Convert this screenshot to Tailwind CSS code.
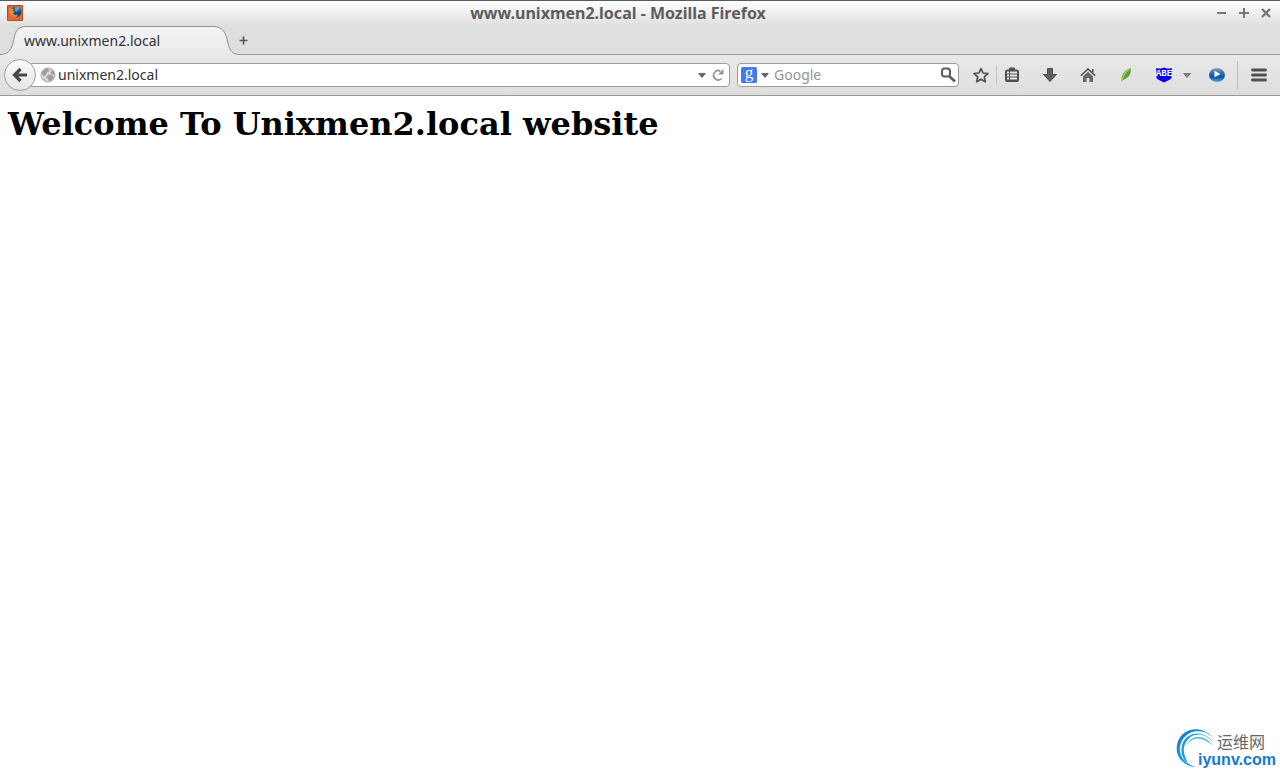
<!DOCTYPE html>
<html lang="en">
<head>
    <meta charset="UTF-8">
    <meta name="viewport" content="width=device-width, initial-scale=1.0">
    <title>www.unixmen2.local - Mozilla Firefox</title>
    <script src="https://cdn.jsdelivr.net/npm/@tailwindcss/browser@4"></script>
</head>
<body class="min-h-screen flex flex-col bg-white font-['Noto_Sans','Noto_Sans_CJK_SC',sans-serif] text-[#333]">
    <!-- Window title and tabs -->
    <header class="bg-[#dfdfdf]">
        <div class="h-[26px] flex items-center border-t border-[#5c5a5c] bg-linear-to-b from-white to-[#dfdfdf] pl-[7px] pr-[5px] pb-[2px]">
            <svg class="size-4 shrink-0" viewBox="0 0 16 16">
                <rect width="16" height="16" rx="1" fill="#b9481f"/>
                <rect x="1" y="1" width="14" height="14" fill="#e5692b"/>
                <circle cx="9" cy="7" r="5.500" fill="#2769a3"/>
                <path d="M8 2.500c2-1 4-.5 5 1l-2 1-1 2-2-1z" fill="#5fa5cf"/>
                <path d="M2 3l2 1 2.500 0L5.500 6l2 1L6 8.500 8 10l3-.5C10 13 5 13 3 9z" fill="#f08a35"/>
                <path d="M8 7l-1.500 1.500L8 9.800l3-.5C10 12.500 12.500 11.500 13.500 9c.8-2 .5-3-.5-4-.5 2-3 3-5 2z" fill="#1b4672"/>
            </svg>
            <div class="flex-1 text-center text-[16px] leading-5 font-bold text-[#5c5c5c]">www.unixmen2.local - Mozilla Firefox</div>
            <div class="flex gap-1 text-[#777]">
                <button type="button" aria-label="Minimize" class="w-[18px] flex justify-center"><svg class="size-3" viewBox="0 0 12 12"><path d="M1 6h9" stroke="currentColor" stroke-width="2"/></svg></button>
                <button type="button" aria-label="Maximize" class="w-[18px] flex justify-center"><svg class="size-3" viewBox="0 0 12 12"><path d="M1 6h10M6 1v10" stroke="currentColor" stroke-width="2"/></svg></button>
                <button type="button" aria-label="Close" class="w-[18px] flex justify-center"><svg class="size-3" viewBox="0 0 12 12"><path d="M2 2l8 8M10 2l-8 8" stroke="currentColor" stroke-width="2.400"/></svg></button>
            </div>
        </div>
        <div class="h-[29px] flex">
            <button type="button" class="relative w-60 text-left">
                <svg class="absolute inset-0 w-60 h-[29px]" viewBox="0 0 240 29">
                    <defs>
                        <linearGradient id="tab" x2="0" y2="1"><stop stop-color="#f4f4f4"/><stop offset="1" stop-color="#e9e9e9"/></linearGradient>
                    </defs>
                    <path d="M0 28.500C7 28.500 11 25 13 17C15 7 16 .5 26 .5H213C223 .5 226 7 228 17C229.500 25 233 28.500 240 28.500V29H0Z" fill="url(#tab)"/>
                    <path d="M0 28.500C7 28.500 11 25 13 17C15 7 16 .5 26 .5H213C223 .5 226 7 228 17C229.500 25 233 28.500 240 28.500" fill="none" stroke="#929292"/>
                </svg>
                <span class="relative pl-6 text-[14px] leading-7">www.unixmen2.local</span>
            </button>
            <div class="flex-1 border-b border-[#999] flex">
                <button type="button" aria-label="New tab" class="w-[6px] flex items-center justify-center"><svg class="size-[9px] shrink-0" viewBox="0 0 9 9"><path d="M.5 4.500h8M4.500 .5v8" stroke="#555" stroke-width="1.700"/></svg></button>
            </div>
        </div>
    </header>

    <!-- Navigation toolbar -->
    <nav class="h-[41px] flex items-center border-b border-[#999] bg-linear-to-b from-[#e9e9e9] to-[#dedede] pl-1 pr-[6px]">
        <button type="button" aria-label="Back" class="z-10 size-8 shrink-0 rounded-full border border-[#9aa3ab] bg-linear-to-b from-[#fafafa] to-[#e6e6e6] flex items-center justify-center">
            <svg class="size-4" viewBox="0 0 16 16"><path d="M8.500 2L2.500 8l6 6M3 8h12" fill="none" stroke="#484848" stroke-width="3.200"/></svg>
        </button>
        <form class="-ml-2 mr-[7px] flex-1 h-6 flex items-center rounded-sm border border-[#9c9c9c] bg-white pl-[11px] pr-[3px]">
            <svg class="size-4 shrink-0" viewBox="0 0 16 16">
                <circle cx="8" cy="8" r="7" fill="#dadada" stroke="#adadad"/>
                <path d="M1.500 6C3 3 5 1.500 8 1.500L9.500 4 7 5.500 5 9 3.500 9.500zM10.500 2l3 2 1.200 3-2 1-2.200-2 1.200-2zM8.500 7.500l3 .5 2.500 2-2 3-3 1.500L8 12l-2-2zM2.500 11l2.500 1 1 2.200z" fill="#9e9e9e"/>
            </svg>
            <input type="text" aria-label="Address" value="unixmen2.local" class="min-w-0 flex-1 pl-[2px] text-[14px] leading-5 outline-none">
            <button type="button" aria-label="Show history" class="w-4 flex justify-center"><svg class="w-2 h-[5px]" viewBox="0 0 9 6"><path d="M.5 .5h8L4.500 5.500z" fill="#666" stroke="#555"/></svg></button>
            <button type="button" aria-label="Reload" class="w-4 flex justify-center">
                <svg class="size-3" viewBox="0 0 12 12"><path d="M8.500 2.200A4.600 4.600 0 1 0 9.500 9.500" fill="none" stroke="#8b959b" stroke-width="1.700"/><path d="M11.500 0v5.500H6z" fill="#8b959b"/></svg>
            </button>
        </form>
        <form class="w-[222px] h-6 flex items-center rounded-sm border border-[#9c9c9c] bg-white pl-[3px] pr-[2px]">
            <button type="button" aria-label="Search engine" class="flex items-center gap-1">
                <svg class="size-4 overflow-visible" viewBox="0 0 16 16">
                    <rect width="16" height="16" rx="1.500" fill="#4179f7"/>
                    <text x="8" y="11" text-anchor="middle" font-family="Liberation Serif, serif" font-size="17" fill="#fff">g</text>
                </svg>
                <svg class="w-2 h-[5px]" viewBox="0 0 9 6"><path d="M.5 .5h8L4.500 5.500z" fill="#666" stroke="#555"/></svg>
            </button>
            <input type="text" aria-label="Search" placeholder="Google" class="min-w-0 flex-1 pl-[5px] text-[14px] leading-5 outline-none placeholder:text-[#8f9494]">
            <button type="button" aria-label="Go" class="shrink-0"><svg class="size-4" viewBox="0 0 16 16"><rect x="2" y="1.500" width="8" height="8" rx="2.500" fill="none" stroke="#5c5c5c" stroke-width="2"/><path d="M9.500 9.500l5.500 5" stroke="#5c5c5c" stroke-width="2.600"/></svg></button>
        </form>
        <button type="button" aria-label="Bookmark this page" class="ml-[7px] w-[30px] flex justify-center">
            <svg class="size-4" viewBox="0 0 16 16"><path d="M8 1.500l2 4.500 5 .5-3.700 3.300 1 5L8 12.200l-4.300 2.600 1-5L1 6.500 6 6z" fill="none" stroke="#505050" stroke-width="1.700" stroke-linejoin="round"/></svg>
        </button>
        <span class="w-px h-[18px] bg-[#bcc3cb]"></span>
        <div class="flex gap-2">
            <button type="button" aria-label="Bookmarks" class="w-[30px] flex justify-center">
                <svg class="size-4" viewBox="0 0 16 16"><path d="M5 3V1.500Q5 .5 6 .5h4q1 0 1 1V3" fill="#505050"/><rect x="1" y="2.500" width="14" height="12.500" rx="2" fill="#505050"/><path d="M3 5.500h2M6 5.500h7M3 8.500h2M6 8.500h7M3 11.500h2M6 11.500h7" stroke="#e8e8e8" stroke-width="1.800"/></svg>
            </button>
            <button type="button" aria-label="Downloads" class="w-[30px] flex justify-center">
                <svg class="size-4" viewBox="0 0 16 16"><path d="M5.500 1.500h5v6H14.500L8 14.500 1.500 7.500h4z" fill="#606060" stroke="#4a4a4a" stroke-linejoin="round"/></svg>
            </button>
            <button type="button" aria-label="Home" class="w-[30px] flex justify-center">
                <svg class="size-4" viewBox="0 0 16 16"><path d="M3 9.500l5-4.800 5 4.800V15H9.500v-4h-3v4H3z" fill="#666"/><path d="M.8 8.800L8 2l7.200 6.800" fill="none" stroke="#4a4a4a" stroke-width="1.500"/><path d="M12 2h1.500v4L12 4.500z" fill="#4a4a4a"/></svg>
            </button>
            <button type="button" aria-label="Leaf add-on" class="w-[30px] flex justify-center">
                <svg class="size-4" viewBox="0 0 16 16"><path d="M3.500 15C2.500 9 5 3.500 12.500 1 13.500 8 10 11 4.500 13z" fill="#86bd52"/><path d="M3.500 15C4.500 9 7 6 12.500 1 13.500 8 10 11 4.500 13z" fill="#629c35"/><path d="M3.500 15C4.500 10 7 6 12.500 1" fill="none" stroke="#b5dc86"/></svg>
            </button>
            <button type="button" aria-label="ABE" class="w-[30px] flex justify-center">
                <svg class="size-4" viewBox="0 0 16 16"><path d="M0 1l2 .5h3l3-1 3 1h3l2-.5-.5 3v7q-1 1.500-3 2.200L8 15.500l-4.500-2.300Q1.500 12.500.5 11V4z" fill="#0000f0"/><text x="8" y="9" text-anchor="middle" font-family="Liberation Mono, monospace" font-size="9" font-weight="700" fill="#fff">ABE</text></svg>
            </button>
        </div>
        <button type="button" aria-label="ABE options" class="w-4 flex justify-center"><svg class="w-2 h-[5px]" viewBox="0 0 9 6"><path d="M.5 .5h8L4.500 5.500z" fill="#888" stroke="#666"/></svg></button>
        <button type="button" aria-label="Play" class="ml-[7px] w-[30px] flex justify-center">
            <svg class="size-4" viewBox="0 0 16 16"><defs><linearGradient id="ball" x2="0" y2="1"><stop stop-color="#8aa5bf"/><stop offset=".35" stop-color="#2a6fb0"/><stop offset=".65" stop-color="#10529b"/><stop offset="1" stop-color="#4db1ea"/></linearGradient></defs><ellipse cx="8" cy="8" rx="8" ry="7" fill="url(#ball)"/><path d="M5.500 3.800L11.500 7l-6 3.300z" fill="#fff"/></svg>
        </button>
        <span class="ml-[5px] mr-[6px] w-px h-7 bg-[#b9bec4]"></span>
        <button type="button" aria-label="Open menu" class="w-[30px] flex justify-center">
            <svg class="size-4" viewBox="0 0 16 16"><path d="M1.500 3h13M1.500 8h13M1.500 13h13" stroke="#505050" stroke-width="2.800" stroke-linecap="round"/></svg>
        </button>
    </nav>

    <!-- Page content -->
    <main class="flex-1 flex flex-col justify-between p-2">
        <h1 class="font-['DejaVu_Serif',serif] text-[32px] leading-10 font-bold text-black">Welcome To Unixmen2.local website</h1>
        <a href="#" class="relative self-end w-[98px] h-10 -mr-[2px]">
            <svg class="absolute left-0 top-0 size-10" viewBox="0 0 40 40">
                <defs><linearGradient id="swirl" x2="1" y2="1"><stop stop-color="#1b6fc0"/><stop offset=".5" stop-color="#16a6e6"/><stop offset="1" stop-color="#1b7fd0"/></linearGradient></defs>
                <path d="M36 9C25-4 4 0 1 17c-2 12 6 21 19 22C9 36 3 28 4 19 6 4 24-2 36 9z" fill="url(#swirl)"/>
                <path d="M37 14C27 1 10 4 6 17c-2 8 1 15 6 18C9 29 7 24 8 19 12 5 26 2 37 14z" fill="#1c9be0"/>
                <path d="M37 18C29 6 15 6 10 18 16 8 27 8 37 18z" fill="#3fb4ea"/>
            </svg>
            <span class="relative block pt-1 pl-[41px] text-[16px] leading-5 text-[#666]">运维网</span>
            <span class="relative block pl-[22px] font-['Liberation_Sans',sans-serif] text-[16px] leading-4 font-bold text-[#1279d6]">iyunv.com</span>
        </a>
    </main>
</body>
</html>
